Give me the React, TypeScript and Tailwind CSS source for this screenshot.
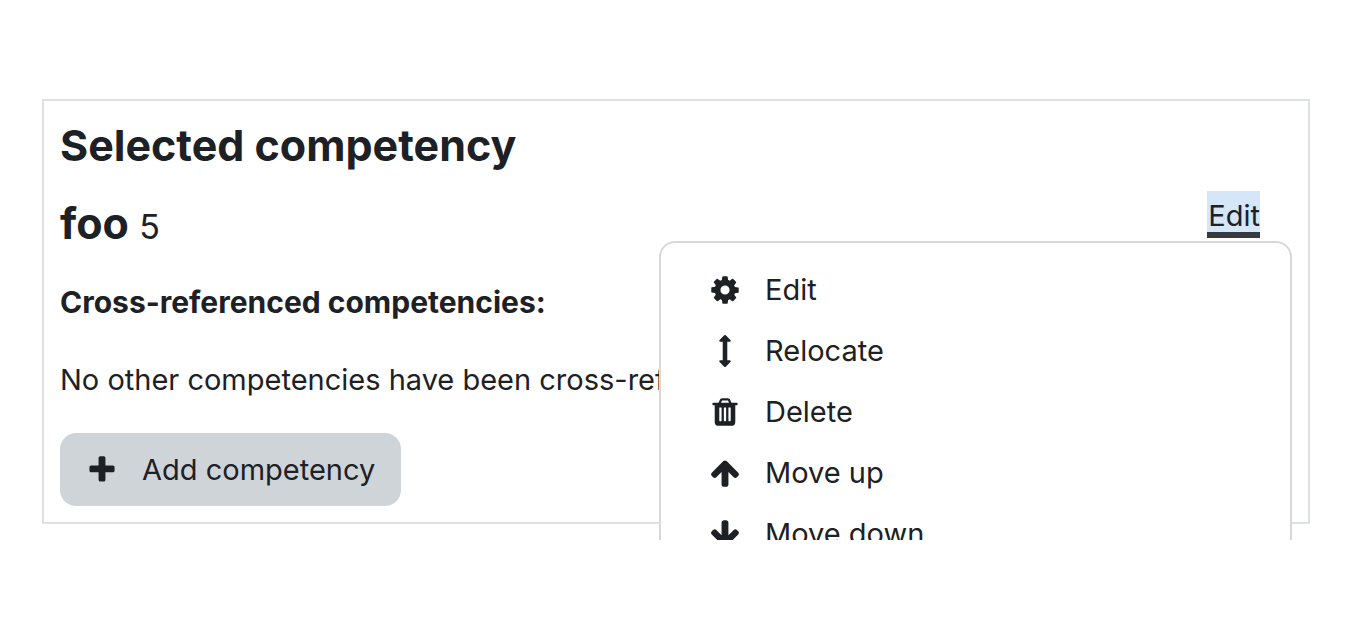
const icons = {
  cog: "M1152 896q0-106-75-181t-181-75-181 75-75 181 75 181 181 75 181-75 75-181zm512-109v222q0 12-8 23t-20 13l-185 28q-19 54-39 91 35 50 107 138 10 12 10 25t-9 23q-27 37-99 108t-94 71q-12 0-26-9l-138-108q-44 23-91 38-16 136-29 186-7 28-36 28h-222q-14 0-24.5-8.5t-11.5-21.5l-28-184q-49-16-90-37l-141 107q-10 9-25 9-14 0-25-11-126-114-165-168-7-10-7-23 0-12 8-23 15-21 51-66.5t54-70.5q-27-50-41-99l-183-27q-13-2-21-12.5t-8-23.5v-222q0-12 8-23t19-13l186-28q14-46 39-92-40-57-107-138-10-12-10-24 0-10 9-23 26-36 98.5-107.5t94.5-71.5q13 0 26 10l138 107q44-23 91-38 16-136 29-186 7-28 36-28h222q14 0 24.5 8.5t11.5 21.5l28 184q49 16 90 37l142-107q9-9 24-9 13 0 25 10 129 119 165 170 7 8 7 22 0 12-8 23-15 21-51 66.5t-54 70.5q26 50 41 98l183 28q13 2 21 12.5t8 23.5z",
  relocate:
    "M1216 320q0 26-19 45t-45 19h-128v1024h128q26 0 45 19t19 45-19 45l-256 256q-19 19-45 19t-45-19l-256-256q-19-19-19-45t19-45 45-19h128v-1024h-128q-26 0-45-19t-19-45 19-45l256-256q19-19 45-19t45 19l256 256q19 19 19 45z",
  trash:
    "M704 1376v-704q0-14-9-23t-23-9h-64q-14 0-23 9t-9 23v704q0 14 9 23t23 9h64q14 0 23-9t9-23zm256 0v-704q0-14-9-23t-23-9h-64q-14 0-23 9t-9 23v704q0 14 9 23t23 9h64q14 0 23-9t9-23zm256 0v-704q0-14-9-23t-23-9h-64q-14 0-23 9t-9 23v704q0 14 9 23t23 9h64q14 0 23-9t9-23zm-544-992h448l-48-117q-7-9-17-11h-317q-10 2-17 11zm928 32v64q0 14-9 23t-23 9h-96v948q0 83-47 143.5t-113 60.5h-832q-66 0-113-58.5t-47-141.5v-952h-96q-14 0-23-9t-9-23v-64q0-14 9-23t23-9h309l70-167q15-37 54-63t79-26h320q40 0 79 26t54 63l70 167h309q14 0 23 9t9 23z",
  up: "M1675 971q0 51-37 90l-75 75q-38 38-91 38-54 0-90-38l-294-293v704q0 52-37.5 84.5t-90.5 32.5h-128q-53 0-90.5-32.5t-37.5-84.5v-704l-294 293q-36 38-90 38t-90-38l-75-75q-38-38-38-90 0-53 38-91l651-651q35-37 90-37 54 0 91 37l651 651q37 39 37 91z",
  down: "M1675 832q0 53-37 90l-651 652q-39 37-91 37-53 0-90-37l-651-652q-38-36-38-90 0-53 38-91l74-75q39-37 91-37 53 0 90 37l294 294v-704q0-52 38-90t90-38h128q52 0 90 38t38 90v704l294-294q37-37 90-37 52 0 91 37l75 75q37 39 37 91z",
  plus: "M1600 736v192q0 40-28 68t-68 28h-416v416q0 40-28 68t-68 28h-192q-40 0-68-28t-28-68v-416h-416q-40 0-68-28t-28-68v-192q0-40 28-68t68-28h416v-416q0-40 28-68t68-28h192q40 0 68 28t28 68v416h416q40 0 68 28t28 68z",
};

function Icon({ name }: { name: keyof typeof icons }) {
  return (
    <svg viewBox="0 0 1792 1792" className="size-8 shrink-0" fill="currentColor" aria-hidden="true">
      <path d={icons[name]} />
    </svg>
  );
}

const actions: { label: string; icon: keyof typeof icons }[] = [
  { label: "Edit", icon: "cog" },
  { label: "Relocate", icon: "relocate" },
  { label: "Delete", icon: "trash" },
  { label: "Move up", icon: "up" },
  { label: "Move down", icon: "down" },
];

export default function App() {
  return (
    <main className="overflow-hidden bg-white pt-[99px] pr-9 pb-4 pl-[42px] font-['Inter',sans-serif] text-[29px] leading-[45px] text-[#1d2125]">
      <section className="border-2 border-[#dee2e6] px-4 pt-[17px] pb-4">
        <h2 className="mb-6 text-[43px] leading-[54px] font-bold">Selected competency</h2>
        <div className="mb-[26px] flex items-start justify-between">
          <h3 className="text-[43px] leading-[54px] font-bold">
            foo <small className="text-[34px] font-normal">5</small>
          </h3>
          <div className="relative -mt-[5px] mr-8">
            <a href="#edit" className="block border-b-[6px] border-[#343a40] bg-[#d5e6f8] pt-2 pl-px leading-[33px]">
              Edit
            </a>
            <ul className="absolute top-full -right-8 mt-[3px] w-[633px] rounded-2xl border-2 border-[#d8d8d8] bg-white py-4">
              {actions.map(({ label, icon }) => (
                <li key={label}>
                  <a href={"#" + label.toLowerCase().replace(" ", "-")} className="flex items-center gap-6 px-12 py-2">
                    <Icon name={icon} />
                    {label}
                  </a>
                </li>
              ))}
            </ul>
          </div>
        </div>
        <p className="mb-8 text-[30px] font-bold">Cross-referenced competencies:</p>
        <p className="mb-[31px] overflow-hidden whitespace-nowrap">
          No other competencies have been cross-referenced.
        </p>
        <button type="button" className="flex items-center gap-6 rounded-2xl bg-[#ced4d8] px-[26px] py-3.5">
          <Icon name="plus" />
          Add competency
        </button>
      </section>
    </main>
  );
}
